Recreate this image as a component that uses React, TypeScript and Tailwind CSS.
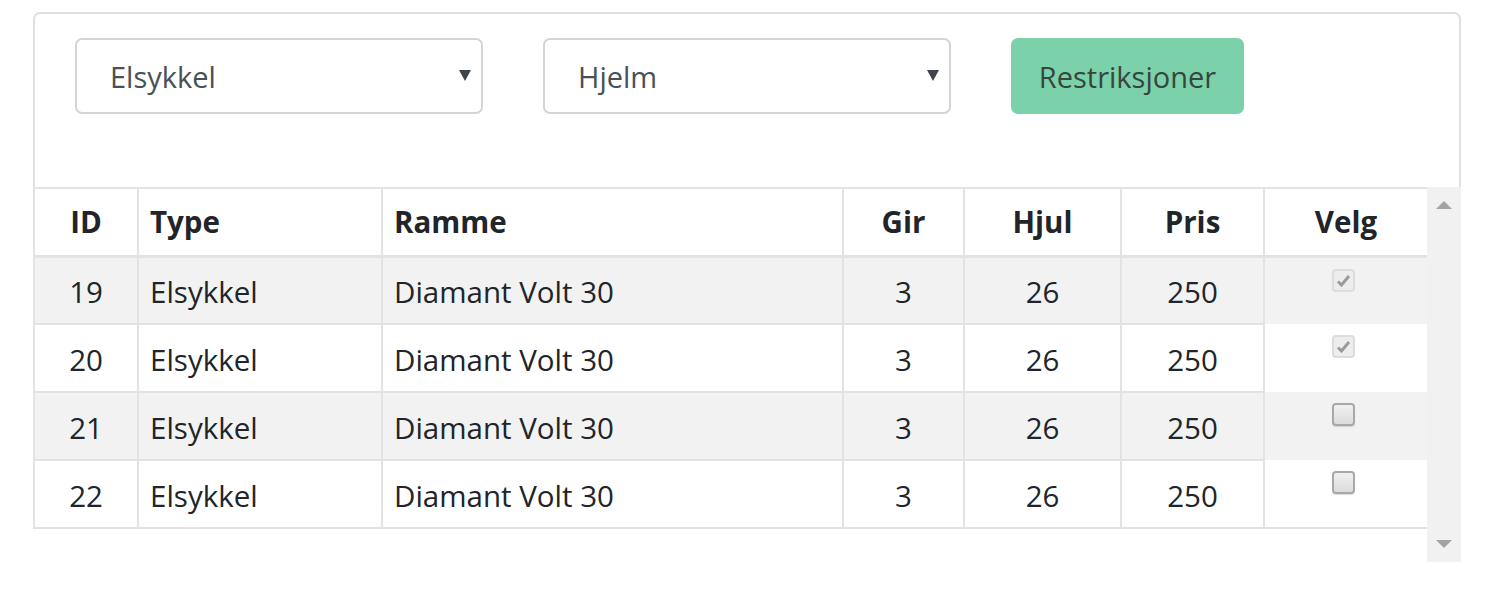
import React from 'react';

const rows = [
  { id: 19, type: 'Elsykkel', ramme: 'Diamant Volt 30', gir: 3, hjul: 26, pris: 250, checked: true },
  { id: 20, type: 'Elsykkel', ramme: 'Diamant Volt 30', gir: 3, hjul: 26, pris: 250, checked: true },
  { id: 21, type: 'Elsykkel', ramme: 'Diamant Volt 30', gir: 3, hjul: 26, pris: 250, checked: false },
  { id: 22, type: 'Elsykkel', ramme: 'Diamant Volt 30', gir: 3, hjul: 26, pris: 250, checked: false },
];

function Select({ value }: { value: string }) {
  return (
    <div className="relative flex h-[76px] w-[408px] items-center rounded-[7px] border-2 border-[#d3d4d8] bg-white pl-[33px] pt-[2px] text-[29px] text-[#495057]">
      {value}
      <span className="absolute right-[10px] top-[30px] h-0 w-0 border-x-[6px] border-t-[11px] border-x-transparent border-t-[#40454b]" />
    </div>
  );
}

function Checkbox({ checked }: { checked: boolean }) {
  if (checked) {
    return (
      <span className="mx-auto flex h-[23px] w-[23px] items-center justify-center rounded-[4px] border-2 border-[#dcdcdc] bg-[#ededed]">
        <svg width="15" height="13" viewBox="0 0 15 13">
          <path d="M2 7.5 L5.5 11 L13 2" fill="none" stroke="#9a9a9a" strokeWidth="3" />
        </svg>
      </span>
    );
  }
  return (
    <span className="mx-auto block h-[23px] w-[23px] rounded-[4px] border-2 border-[#a8a8a8] bg-gradient-to-b from-[#f0f0f0] to-[#dcdcdc] shadow-[0_1px_1px_rgba(0,0,0,0.15)]" />
  );
}

export default function App() {
  const cell = 'border-2 border-[#e2e3e5] h-[68px] px-[11px] align-middle';
  return (
    <div className="min-h-screen bg-white pl-[33px] pt-[12px] text-[#212529]" style={{ fontFamily: '"Open Sans", "Noto Sans", sans-serif' }}>
      <div className="w-[1428px]">
        <div className="flex h-[175px] items-start gap-[60px] rounded-t-[7px] border-x-2 border-t-2 border-[#e0e0e0] pl-[40px] pt-[24px]">
          <Select value="Elsykkel" />
          <Select value="Hjelm" />
          <button className="h-[76px] w-[233px] rounded-[7px] bg-[#7bd1a9] pt-[2px] text-[29px] text-[#36463e]">Restriksjoner</button>
        </div>
        <div className="flex">
          <div className="h-[375px] w-[1394px]">
            <table className="w-[1394px] table-fixed border-collapse text-[29.5px]">
              <colgroup>
                <col className="w-[104px]" />
                <col className="w-[244px]" />
                <col className="w-[461px]" />
                <col className="w-[121px]" />
                <col className="w-[157px]" />
                <col className="w-[143px]" />
                <col className="w-[164px]" />
              </colgroup>
              <thead>
                <tr className="font-bold">
                  <th className={`${cell} border-b-[3px] text-center`}>ID</th>
                  <th className={`${cell} border-b-[3px] text-left`}>Type</th>
                  <th className={`${cell} border-b-[3px] text-left`}>Ramme</th>
                  <th className={`${cell} border-b-[3px] text-center`}>Gir</th>
                  <th className={`${cell} border-b-[3px] text-center`}>Hjul</th>
                  <th className={`${cell} border-b-[3px] text-center`}>Pris</th>
                  <th className={`${cell} border-b-[3px] text-center`}>Velg</th>
                </tr>
              </thead>
              <tbody>
                {rows.map((r, i) => (
                  <tr key={r.id} className={i % 2 === 0 ? 'bg-[#f2f2f2]' : 'bg-white'}>
                    <td className={`${cell} pt-[4px] text-center`}>{r.id}</td>
                    <td className={`${cell} pt-[4px]`}>{r.type}</td>
                    <td className={`${cell} pt-[4px]`}>{r.ramme}</td>
                    <td className={`${cell} pt-[4px] text-center`}>{r.gir}</td>
                    <td className={`${cell} pt-[4px] text-center`}>{r.hjul}</td>
                    <td className={`${cell} pt-[4px] text-center`}>{r.pris}</td>
                    <td className={`${cell} border-y-0 pl-[8px] pr-[14px] pt-[11px] align-top ${i === rows.length - 1 ? 'border-b-2' : ''}`}>
                      <Checkbox checked={r.checked} />
                    </td>
                  </tr>
                ))}
              </tbody>
            </table>
          </div>
          <div className="flex h-[375px] w-[34px] flex-col items-center justify-between bg-[#f1f1f1] py-[14px]">
            <span className="h-0 w-0 border-x-[8px] border-b-[8px] border-x-transparent border-b-[#a3a3a3]" />
            <span className="h-0 w-0 border-x-[8px] border-t-[8px] border-x-transparent border-t-[#a3a3a3]" />
          </div>
        </div>
      </div>
    </div>
  );
}
